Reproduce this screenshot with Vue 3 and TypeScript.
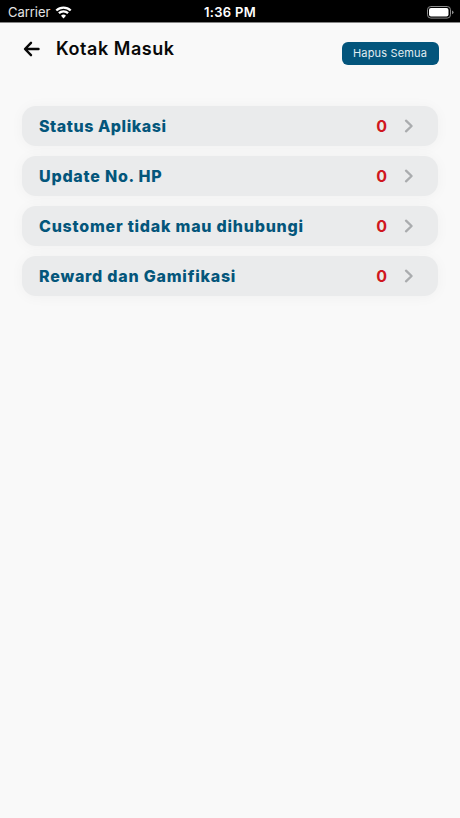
<script setup lang="ts">
interface InboxCategory {
  key: string
  label: string
  count: number
}

const categories: InboxCategory[] = [
  { key: 'status', label: 'Status Aplikasi', count: 0 },
  { key: 'phone', label: 'Update No. HP', count: 0 },
  { key: 'customer', label: 'Customer tidak mau dihubungi', count: 0 },
  { key: 'reward', label: 'Reward dan Gamifikasi', count: 0 },
]
</script>

<template>
  <div class="screen">
    <div class="status-bar">
      <div class="carrier">
        <span>Carrier</span>
        <svg class="wifi" viewBox="0 0 17 13" aria-hidden="true">
          <path d="M1.3 4.5a10.4 10.4 0 0 1 14.4 0" />
          <path d="M3.9 7.2a6.7 6.7 0 0 1 9.2 0" />
          <path class="wifi-dot" d="M8.5 12.4 6 9.8a3.6 3.6 0 0 1 5 0z" />
        </svg>
      </div>
      <span class="time">1:36 PM</span>
      <svg class="battery" viewBox="0 0 27 13" aria-hidden="true">
        <rect class="shell" x="0.5" y="0.5" width="23" height="11.6" rx="3.3" />
        <rect class="charge" x="2" y="2" width="19.5" height="8.6" rx="2" />
        <path class="charge cap" d="M25 4.4q1.5.6 1.5 1.9T25 8.2z" />
      </svg>
    </div>

    <header class="header">
      <svg class="back" viewBox="0 0 16 16" aria-label="Kembali">
        <path d="M7.5 1.8 1.5 8l6 6.2M2 8h13" />
      </svg>
      <h1 class="title">Kotak Masuk</h1>
      <button class="clear" type="button">Hapus Semua</button>
    </header>

    <main class="list">
      <div v-for="item in categories" :key="item.key" class="card">
        <span class="label" :class="item.key">{{ item.label }}</span>
        <span class="count">{{ item.count }}</span>
        <svg class="chevron" viewBox="0 0 10 14" aria-hidden="true">
          <path d="M2 1.7 7.6 7 2 12.3" />
        </svg>
      </div>
    </main>
  </div>
</template>

<style>
body {
  margin: 0;
  background: #f9f9f9;
}
</style>

<style scoped>
.screen {
  height: 818px;
  overflow: hidden;
  background: #f9f9f9;
  font-family: Inter, "Liberation Sans", sans-serif;
}
.status-bar {
  box-sizing: border-box;
  height: 22px;
  padding: 1px 6px 0 8px;
  display: grid;
  grid-template-columns: 1fr auto 1fr;
  align-items: center;
  background: #000;
  color: #fff;
  font-size: 13px;
  line-height: 22px;
}
.carrier {
  display: flex;
  align-items: center;
  gap: 5px;
  color: #e4e4e4;
  letter-spacing: -0.05px;
}
.wifi {
  width: 17px;
  height: 13px;
  fill: none;
  stroke: #fff;
  stroke-width: 2.3;
}
.wifi-dot {
  fill: #fff;
  stroke: none;
}
.time {
  margin-right: 2px;
  font-weight: 600;
  letter-spacing: 0.3px;
}
.battery {
  justify-self: end;
  width: 27px;
  height: 13px;
}
.shell {
  fill: none;
  stroke: #8c8c8c;
}
.charge {
  fill: #fff;
}
.cap {
  fill: #8c8c8c;
}
.header {
  box-sizing: border-box;
  height: 84px;
  padding: 0 21.5px 0 23px;
  display: flex;
  align-items: flex-start;
  border-top: 1px solid #858585;
}
.back {
  width: 17px;
  height: 16px;
  margin-top: 18px;
  fill: none;
  stroke: #080808;
  stroke-width: 2.4;
  stroke-linecap: round;
  stroke-linejoin: round;
}
.title {
  flex: 1;
  margin: 14px 0 0 16px;
  color: #080808;
  font-size: 18px;
  font-weight: 600;
  line-height: 24px;
  letter-spacing: 0.55px;
}
.clear {
  width: 97px;
  height: 22.5px;
  margin: 19px 0 0;
  padding: 0;
  border: 0;
  border-radius: 6px;
  background: #03557c;
  color: #e2edf2;
  font-family: inherit;
  font-size: 11px;
  font-weight: 400;
  line-height: 22px;
  letter-spacing: 0.15px;
  white-space: nowrap;
}
.list {
  padding: 0 22px;
  display: flex;
  flex-direction: column;
  gap: 10.5px;
}
.card {
  box-sizing: border-box;
  height: 39.5px;
  padding: 0 24px 0 17px;
  display: flex;
  align-items: center;
  border-radius: 14px;
  background: #eaebec;
  box-shadow: 0 1px 14px rgba(0, 0, 0, 0.04);
}
.label {
  flex: 1;
  color: #04567b;
  font-size: 16px;
  font-weight: 800;
  line-height: 22px;
  letter-spacing: 0.77px;
  white-space: nowrap;
}
.label.status {
  letter-spacing: 0.55px;
}
.count {
  color: #d01720;
  font-size: 16px;
  font-weight: 700;
  line-height: 22px;
}
.chevron {
  width: 10px;
  height: 14px;
  margin-left: 17px;
  fill: none;
  stroke: #aaacae;
  stroke-width: 2.3;
  stroke-linecap: round;
  stroke-linejoin: round;
}
</style>
